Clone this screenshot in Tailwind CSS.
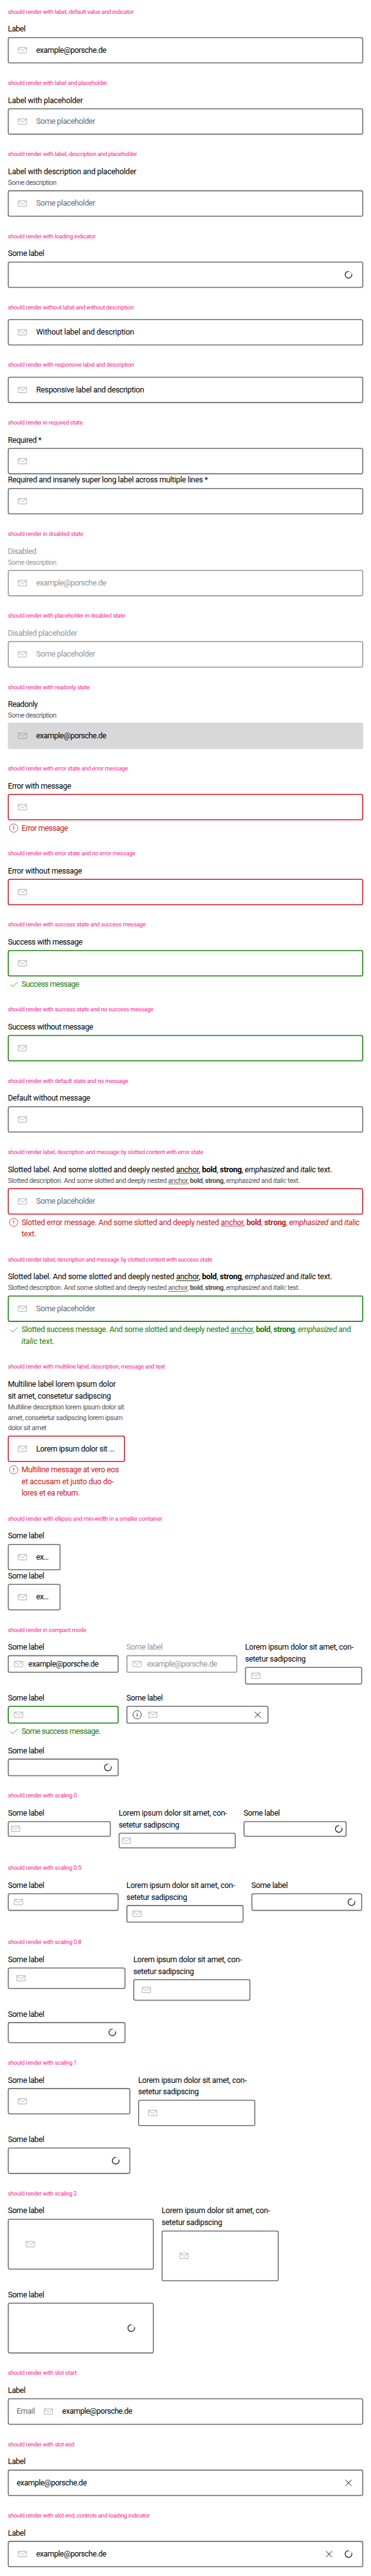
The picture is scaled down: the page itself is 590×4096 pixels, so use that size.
<!DOCTYPE html>
<html lang="en">
<head>
<meta charset="utf-8">
<title>Text field states</title>
<script src="https://cdn.jsdelivr.net/npm/@tailwindcss/browser@4"></script>
</head>
<body class="bg-white">
<div class="h-[4096px] w-[590px] overflow-hidden">
<main id="page" class="w-[760px] origin-top-left scale-x-[0.7763] scale-y-[0.7759] px-4 pb-[17px] font-[Roboto,sans-serif] text-base/6 text-[#010205]"></main>
</div>
<script>
const svg = (cls, body) => `<svg viewBox="0 0 24 24" fill="none" stroke="currentColor" class="size-6 shrink-0 ${cls}">${body}</svg>`;
const mail = svg('text-[#949598]', '<rect x="3.5" y="6.5" width="17" height="11.2" rx="1"/><path d="M3.8 6.9 12 13.4l8.2-6.5"/>');
const warn = svg('', '<circle cx="12" cy="12" r="8.5"/><path stroke-width="1.4" d="M12 7.8v5.4M12 14.6V16"/>');
const info = svg('text-[#010205]', '<circle cx="12" cy="12" r="8.5"/><path stroke-width="1.3" d="M12 8v1.4M12 10.8V16"/>');
const check = svg('', '<path d="m5 12.4 5.3 4.4L20 7.4"/>');
const close = svg('text-[#010205]', '<path stroke-width="1.2" d="m6 6 12 12M18 6 6 18"/>');
const spin = svg('text-[#010205]', '<circle cx="12" cy="12" r="6.9" stroke="#b5b6b9" stroke-width="1.2"/><path stroke-width="1.4" d="M12 5.1a6.9 6.9 0 1 0 6.7 5.2"/>');

// Natural width of a line that may hold bold and italic runs.
const pen = document.createElement('canvas').getContext('2d');
function natural(html, size) {
  const d = document.createElement('div');
  d.innerHTML = html;
  let w = 0;
  for (const n of d.childNodes) {
    const style = /^(B|STRONG)$/.test(n.nodeName) ? 'bold ' : /^(I|EM)$/.test(n.nodeName) ? 'italic ' : '';
    pen.font = `${style}${size}px Roboto`;
    w += pen.measureText(n.textContent).width;
  }
  return [w, d.textContent.length];
}
// One line of text, tracked to the width it should take.
const t = (text, width, cls = '', size = 16) => {
  const [w, n] = natural(text, size);
  return `<span style="letter-spacing:${((width - w) / n).toFixed(3)}px" class="whitespace-nowrap ${cls}">${text}</span>`;
};
const lines = (a, size) => a.map(l => `<div class="whitespace-nowrap">${t(l[0], l[1], '', size)}</div>`).join('');
const grow = '<span class="flex-1"></span>';

const tones = {
  base: 'border-[#6b6d70]', off: 'border-[#949598] text-[#949598]', err: 'border-[#cc1922]',
  ok: 'border-[#197e10]', read: 'border-[#d8d8db] bg-[#d8d8db]'
};
const sizes = {
  full: 'h-[54px] gap-4 px-4', compact: 'h-9 gap-2 px-2', s0: 'h-8 gap-0.5 px-0.5',
  s8: 'h-[43.5px] gap-3 px-[12.8px]', s2: 'h-[104px] gap-8 px-8'
};
const field = (inner, tone, size, cls) =>
  `<div class="flex items-center overflow-hidden rounded-[4px] border-2 ${cls} ${tones[tone]} ${sizes[size]}">${inner}</div>`;
const box = (inner, tone = 'base', size = 'full') => field(inner, tone, size, 'mt-1');
const bare = inner => field(inner, 'base', 'full', '');
const label = (a, cls = '') => `<div class="${cls}">${lines(a)}</div>`;
const desc = (a, cls = 'text-[#535457]') => `<div class="text-[14px]/[21.75px] ${cls}">${lines(a, 14)}</div>`;
const msg = (a, err) => `<div class="mt-1 flex gap-1 ${err ? 'text-[#cc1922]' : 'text-[#197e10]'}">${err ? warn : check}<div>${lines(a)}</div></div>`;
const section = (title, body, first) =>
  `<section class="${first ? '' : 'pt-4'}"><h2 class="h-12 pt-[15px] text-[12px]/[18px] tracking-[-0.29px] text-[#ff1493]">${title}</h2>${body}</section>`;
const item = (w, body) => `<div class="${w}">${body}</div>`;
const row = body => `<div class="flex flex-wrap items-start gap-4">${body}</div>`;

const some = [['Some label', 74.2]];
const lorem = [['Lorem ipsum dolor sit amet, con-', 222], ['setetur sadipscing', 124]];
const lab = [['Label', 35.9]];
const email = t('example@porsche.de', 143.5);
const ph = t('Some placeholder', 120.7, 'text-[#6b6d70]');
const rich = '<a class="underline underline-offset-2">anchor</a>, <b>bold</b>, <strong>strong</strong>, <em>emphasized</em> and';
const richDesc = [[`Slotted description. And some slotted and deeply nested ${rich} <i>italic</i> text.`, 598.6]];
const richLabel = [[`Slotted label. And some slotted and deeply nested ${rich} <i>italic</i> text.`, 665]];
const grey = 'text-[#949598]';
const small = label(some) + box(mail + t('ex...', 25.2));

document.getElementById('page').innerHTML = [
  section('should render with label, default value and indicator', label(lab) + box(mail + email), true),
  section('should render with label and placeholder', label([['Label with placeholder', 153.7]]) + box(mail + ph)),
  section('should render with label, description and placeholder', label([['Label with description and placeholder', 263.2]]) + desc([['Some description', 99.4]]) + box(mail + ph)),
  section('should render with loading indicator', label(some) + box(grow + spin)),
  section('should render without label and without description', bare(mail + t('Without label and description', 200.7))),
  section('should render with responsive label and description', bare(mail + t('Responsive label and description', 221))),
  section('should render in required state', label([['Required *', 68.8]]) + box(mail) + label([['Required and insanely super long label across multiple lines *', 409.6]]) + box(mail)),
  section('should render in disabled state', label([['Disabled', 58.2]], grey) + desc([['Some description', 99.4]], grey) + box(mail + email, 'off')),
  section('should render with placeholder in disabled state', label([['Disabled placeholder', 142]], grey) + box(mail + t('Some placeholder', 120.7), 'off')),
  section('should render with readonly state', label([['Readonly', 61]]) + desc([['Some description', 99.4]]) + box(mail + email, 'read')),
  section('should render with error state and error message', label([['Error with message', 129.4]]) + box(mail, 'err') + msg([['Error message', 95]], true)),
  section('should render with error state and no error message', label([['Error without message', 151.7]]) + box(mail, 'err')),
  section('should render with success state and success message', label([['Success with message', 152.7]]) + box(mail, 'ok') + msg([['Success message', 117.8]])),
  section('should render with success state and no success message', label([['Success without message', 174.5]]) + box(mail, 'ok')),
  section('should render with default state and no message', label([['Default without message', 168.7]]) + box(mail)),
  section('should render label, description and message by slotted content with error state', label(richLabel) + desc(richDesc) + box(mail + ph, 'err') +
    msg([[`Slotted error message. And some slotted and deeply nested ${rich} <i>italic</i>`, 693.2], ['text.', 30]], true)),
  section('should render label, description and message by slotted content with success state', label(richLabel) + desc(richDesc) + box(mail + ph, 'ok') +
    msg([[`Slotted success message. And some slotted and deeply nested ${rich}`, 675.7], ['<i>italic</i> text.', 67.4]])),
  section('should render with multiline label, description, message and text', item('w-60',
    label([['Multiline label lorem ipsum dolor', 221], ['sit amet, consetetur sadipscing', 210.9]]) +
    desc([['Multiline description lorem ipsum dolor sit', 238], ['amet, consetetur sadipscing lorem ipsum', 235.1], ['dolor sit amet', 79]]) +
    box(mail + t('Lorem ipsum dolor sit ...', 160.4), 'err') +
    msg([['Multiline message at vero eos', 199.2], ['et accusam et justo duo do-', 189], ['lores et ea rebum.', 119.2]], true))),
  section('should render with ellipsis and min-width in a smaller container', item('w-[108px]', small + small)),
  section('should render in compact mode', row(
    item('w-[227px]', label(some) + box(mail + email, 'base', 'compact')) +
    item('w-[227px]', label(some, grey) + box(mail + email, 'off', 'compact')) +
    item('w-60', label(lorem) + box(mail, 'base', 'compact')) +
    item('w-[227px]', label(some) + box(mail, 'ok', 'compact') + msg([['Some success message.', 161.8]])) +
    item('w-[291px]', label(some) + box(info + mail + grow + close, 'base', 'compact')) +
    item('w-full', item('w-[227px]', label(some) + box(grow + spin, 'base', 'compact'))))),
  section('should render with scaling 0', row(
    item('w-[211px]', label(some) + box(mail, 'base', 's0')) +
    item('w-60', label(lorem) + box(mail, 'base', 's0')) +
    item('w-[211px]', label(some) + box(grow + spin, 'base', 's0')))),
  section('should render with scaling 0.5', row(
    item('w-[227px]', label(some) + box(mail, 'base', 'compact')) +
    item('w-60', label(lorem) + box(mail, 'base', 'compact')) +
    item('w-[227px]', label(some) + box(grow + spin, 'base', 'compact')))),
  section('should render with scaling 0.8', row(
    item('w-[241px]', label(some) + box(mail, 'base', 's8')) +
    item('w-60', label(lorem) + box(mail, 'base', 's8')) +
    item('w-[241px]', label(some) + box(grow + spin, 'base', 's8')))),
  section('should render with scaling 1', row(
    item('w-[251px]', label(some) + box(mail)) +
    item('w-60', label(lorem) + box(mail)) +
    item('w-[251px]', label(some) + box(grow + spin)))),
  section('should render with scaling 2', row(
    item('w-[299px]', label(some) + box(mail, 'base', 's2')) +
    item('w-60', label(lorem) + box(mail, 'base', 's2')) +
    item('w-[299px]', label(some) + box(grow + spin, 'base', 's2')))),
  section('should render with slot start', label(lab) + box(t('Email', 37.3, 'text-[#6b6d70]') + mail + email)),
  section('should render with slot end', label(lab) + box(email + grow + close)),
  section('should render with slot end, controls and loading indicator', label(lab) + box(mail + email + grow + close + spin))
].join('');
</script>
</body>
</html>
